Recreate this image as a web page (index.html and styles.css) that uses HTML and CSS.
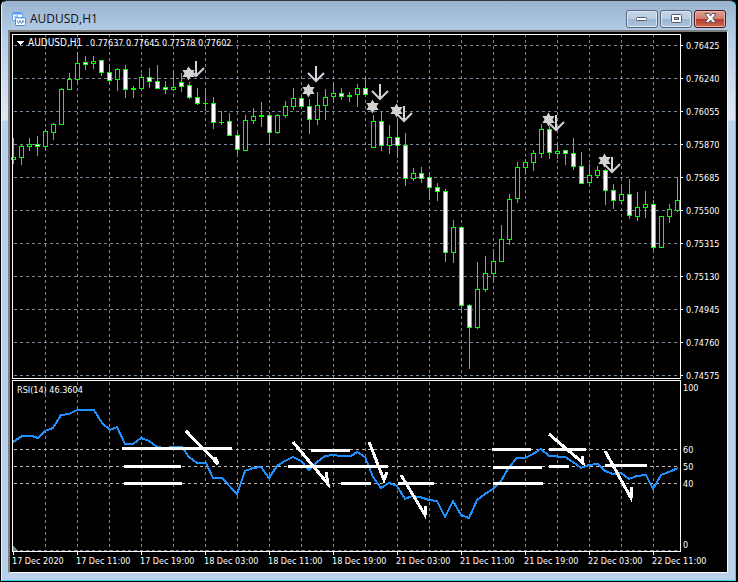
FILE: index.html
```
<!DOCTYPE html>
<html lang="en">
<head>
<meta charset="utf-8">
<title>AUDUSD,H1</title>
<link rel="stylesheet" href="styles.css">
</head>
<body>
<main class="window">
  <header class="titlebar">
    <svg class="app-icon" width="14" height="14" viewBox="0 0 14 14" aria-hidden="true">
      <rect x=".5" y=".5" width="10" height="8" rx="1" fill="#fff" stroke="#5b9cf0"/>
      <path d="M1 1.5h9" stroke="#5b9cf0" stroke-width="2"/>
      <path d="M2 5h2V4h2" fill="none" stroke="#5b9cf0"/>
      <rect x="3.5" y="5.5" width="10" height="8" rx="1" fill="#fff" stroke="#4b88e0"/>
      <path d="M4 6h9" stroke="#72a8f2"/>
      <path d="M5 8.500l1.500 3L8 8.500l1.500 3L11 8.500l1 2" fill="none" stroke="#4b88e0"/>
    </svg>
    <h1 class="title">AUDUSD,H1</h1>
    <div class="controls">
      <button class="control" type="button" aria-label="Minimize">
        <svg width="12" height="6" viewBox="0 0 12 6"><rect x=".5" y="1.5" width="10" height="3" rx="1" fill="#fff" stroke="#535666"/></svg>
      </button>
      <button class="control" type="button" aria-label="Restore">
        <svg width="11" height="9" viewBox="0 0 11 9"><rect x=".5" y=".5" width="10" height="8" rx="1" fill="#fff" stroke="#535666"/><rect x="3.5" y="3.5" width="4" height="2" fill="#a9c0da" stroke="#535666"/></svg>
      </button>
      <button class="control close" type="button" aria-label="Close">
        <svg width="13" height="11" viewBox="0 0 13 11"><path d="M1 .5h3.500l2 2.500 2-2.500H12L8.800 5.200 12 9.500H8.500l-2-2.500-2 2.500H1l3.200-4.300z" fill="#fff" stroke="#535666"/></svg>
      </button>
    </div>
  </header>
  <div class="frame">
    <svg class="chart" viewBox="10 32 717 540" role="img" aria-label="AUDUSD hourly candles with RSI">
      <g id="grid" class="grid"></g>
      <g class="level">
        <path d="M14 449.500H680M14 466.500H680M14 483.500H680"/>
      </g>
      <g id="candles" class="candles"></g>
      <g id="signals"></g>
      <path class="caret" d="M16 41h8l-4 4z"/>
      <g id="header" class="label"><text class="symbol" x="28" y="46">AUDUSD,H1</text></g>
      <path class="corner" d="M13 546l5 5h-5z"/>
      <polyline id="rsi" class="rsi"/>
      <g id="marks"></g>
      <path class="border" d="M12.500 378.500V34.500H680.500V378.500ZM12.500 380.500H680.500V551.500H12.500Z"/>
      <text class="label" x="17" y="393">RSI(14) 46.3604</text>
      <g id="ticks" class="border"></g>
      <g id="axis" class="label"></g>
    </svg>
  </div>
</main>
<script src="chart.js"></script>
</body>
</html>
```
FILE: styles.css
```
* { box-sizing: border-box; }
body { margin: 0; background: #000; font-family: "Open Sans", "Noto Sans", sans-serif; }
.window {
  margin: 0 2px 1px 1px;
  padding: 0 7px 7px 6px;
  border: 1px solid #35d4ee;
  border-top-color: #303840;
  border-left-color: #eaf6ff;
  border-radius: 6px 6px 0 0;
  background: linear-gradient(#9ab4d0 0, #b3cce6 32px, #dfe9f5 119px, #b9d1ea 120px);
}
.titlebar {
  display: flex;
  align-items: center;
  height: 29px;
  padding: 6px 2px 0 4px;
  gap: 4px;
}
.title { margin: 0; flex: 1; font-size: 12px; line-height: 16px; font-weight: 400; color: #111; }
.controls { display: flex; gap: 2px; }
.control {
  display: flex;
  align-items: center;
  justify-content: center;
  width: 32px;
  height: 18px;
  padding: 0;
  border: 1px solid #56697f;
  border-radius: 3px;
  background: linear-gradient(#c3d4e7 0, #b9cde2 48%, #9bb5d1 50%, #afc6df 100%);
  box-shadow: inset 0 0 0 1px #dbe7f4;
}
.close {
  border-color: #4a1a1a;
  background: linear-gradient(#e0a197 0, #cf7b6d 48%, #b5392a 50%, #cc6a50 100%);
  box-shadow: inset 0 0 0 1px #e6b5aa;
}
.frame { border: 1px solid #f7f7f7; border-top: 2px solid #7c7c7c; border-left: 2px solid #808080; background: #000; }
.chart { display: block; width: 100%; height: auto; shape-rendering: crispEdges; }
.grid { stroke: #778899; stroke-dasharray: 3 3; }
.level { stroke: #c0c0c0; stroke-dasharray: 3 3; }
.candles { stroke: #0f0; fill: #000; }
.candles .down { fill: #fff; }
.star { fill: #d3d3d3; shape-rendering: auto; }
.arrow { fill: none; stroke: #d6d3d8; stroke-width: 2; shape-rendering: auto; }
.caret { fill: #fff; }
.corner { fill: #778899; }
.label { fill: #fff; font-family: "DejaVu Sans Condensed", "DejaVu Sans", sans-serif; font-stretch: condensed; font-size: 9px; }
.symbol { font-size: 10px; }
.rsi { fill: none; stroke: #1e90ff; stroke-width: 2; }
.bar { stroke: #fff; stroke-width: 3; }
.pointer { fill: none; stroke: #fff; stroke-width: 3; }
.border { fill: none; stroke: #fff; }
```
FILE: chart.js
```
const NS = "http://www.w3.org/2000/svg";
const byId = (id) => document.getElementById(id);

function add(parent, tag, attrs, text) {
  const el = document.createElementNS(NS, tag);
  for (const key in attrs) el.setAttribute(key, attrs[key]);
  if (text) el.textContent = text;
  byId(parent).appendChild(el);
}

// Grid lines
for (let x = 45; x < 680; x += 32) {
  add("grid", "path", { d: `M${x + 0.5} 34V378M${x + 0.5} 382V551` });
}
for (let y = 45; y < 378; y += 33) add("grid", "path", { d: `M14 ${y + 0.5}H680` });
add("grid", "path", { d: "M14 550.5H680" });

// Candles, one every 8 units: high, low, body top, body bottom, falling
const candles = [
  [138,164,157,160,0],[145,165,146,158,0],[138,151,144,147,0],[136,156,144,147,1],
  [129,150,131,147,0],[123,140,124,133,0],[88,125,89,125,0],[73,90,79,90,0],
  [52,84,63,80,0],[56,70,62,65,1],[56,69,61,64,0],[60,76,60,73,1],
  [64,84,72,81,1],[68,91,69,80,0],[65,98,69,90,1],[86,98,88,90,0],
  [74,91,77,89,0],[68,88,77,82,1],[65,89,81,89,1],[81,94,87,90,1],
  [71,91,87,90,0],[73,92,82,87,1],[82,99,85,98,1],[88,105,97,104,1],
  [90,111,103,104,0],[97,129,103,123,1],[111,125,122,123,0],[113,136,121,136,1],
  [132,154,135,150,1],[115,151,120,151,0],[108,124,116,121,0],[102,127,115,117,0],
  [112,145,115,133,1],[114,134,115,133,0],[101,118,106,116,0],[88,110,98,107,0],
  [97,109,98,107,1],[99,134,106,120,1],[92,125,105,120,0],[89,120,97,106,0],
  [82,103,93,97,0],[88,100,93,97,1],[92,102,95,97,0],[84,107,88,95,0],
  [78,95,88,95,1],[115,148,121,148,0],[112,151,121,146,1],[125,154,137,146,0],
  [118,158,137,146,1],[133,186,145,179,1],[168,181,173,179,0],[167,183,173,179,1],
  [175,200,177,188,1],[183,201,187,192,1],[189,262,191,253,1],[220,263,227,253,0],
  [227,313,227,306,1],[304,369,305,328,1],[262,329,289,328,0],[256,292,273,290,0],
  [249,283,261,274,0],[225,262,239,262,0],[194,245,199,240,0],[162,203,167,199,0],
  [159,174,162,168,0],[150,171,153,163,0],[124,158,129,154,0],[126,159,129,153,1],
  [142,159,151,154,0],[150,165,150,154,1],[138,170,153,167,1],[152,184,166,184,1],
  [164,186,175,183,0],[166,178,170,176,0],[169,205,170,191,1],[184,209,190,201,1],
  [186,203,194,201,0],[179,219,194,216,1],[192,221,207,217,0],[191,218,204,208,0],
  [200,250,204,248,1],[216,248,216,248,0],[204,223,209,217,0],[177,212,200,211,0]
];
candles.forEach(([high, low, top, bottom, falling], i) => {
  const x = 13 + i * 8;
  add("candles", "path", { d: `M${x + 0.5} ${high}V${low}` });
  if (bottom - top < 2) {
    add("candles", "path", { d: `M${x - 2} ${top + 0.5}H${x + 3}` });
  } else {
    add("candles", "rect", {
      x: x - 1.5, y: top + 0.5, width: 4, height: bottom - top - 1,
      class: falling ? "down" : "up"
    });
  }
});

// Signal stars and arrows over the candles
const stars = [[188,73],[308,90],[372,106],[396,110],[548,119],[604,160]];
stars.forEach(([x, y]) => {
  let points = [];
  for (let k = 0; k < 12; k++) {
    const r = k % 2 ? 4 : 7, a = (k * Math.PI) / 6;
    points.push(`${(x + 0.5 + r * Math.sin(a)).toFixed(1)},${(y + 0.5 - r * Math.cos(a)).toFixed(1)}`);
  }
  add("signals", "polygon", { points: points.join(" "), class: "star" });
});
const arrows = [[196,61],[316,66],[380,84],[404,106],[556,115],[612,157]];
arrows.forEach(([x, y]) => {
  add("signals", "path", { d: `M${x} ${y}v15M${x - 8} ${y + 7}l8 8l8 -8`, class: "arrow" });
});

// Quote line
["0.77637", "0.77645", "0.77578", "0.77602"].forEach((quote, i) => {
  add("header", "text", { x: 90 + i * 36, y: 46 }, quote);
});

// RSI curve
byId("rsi").setAttribute("points",
  "13,442 22,436 32,436 38,438 45,431 53,428 61,415 69,414 77,410 94,410 102,423 110,430 117,427 " +
  "125,444 133,444 141,438 149,441 157,447 165,448 173,447 182,447 189,457 197,463 206,463 213,478 " +
  "222,478 237,494 245,471 253,468 261,467 269,478 277,466 285,461 293,457 301,461 309,470 317,462 " +
  "325,456 333,455 341,456 351,456 357,452 365,457 373,477 381,488 389,483 397,486 405,499 412,496 " +
  "420,497 429,500 437,501 445,517 453,501 461,515 469,518 477,500 485,494 493,489 501,481 509,467 " +
  "517,458 525,458 533,454 541,449 549,456 565,457 573,462 581,468 589,465 598,464 605,471 613,474 " +
  "621,473 629,479 637,476 646,475 653,489 661,475 669,472 678,468");

// Hand-drawn levels and pointers in the RSI pane
[
  [122,232,448],[124,181,466],[124,182,483],[311,350,450],[288,388,466],[341,371,483],[398,434,483],
  [492,531,449],[493,542,467],[493,543,483],[549,586,449],[549,569,466],[605,647,465]
].forEach(([x1, x2, y]) => add("marks", "path", { d: `M${x1} ${y + 0.5}H${x2}`, class: "bar" }));
[
  [186,431,219,465,215,457],[293,442,329,485,326,472],[369,442,385,481,387,472],
  [401,475,426,516,426,506],[549,434,584,464,582,456],[605,451,632,499,632,487]
].forEach(([x1, y1, x2, y2, bx, by]) =>
  add("marks", "path", { d: `M${x1} ${y1}L${x2 - 1} ${y2 - 1}L${bx} ${by}`, class: "pointer" }));

// Axes
["0.76425","0.76240","0.76055","0.75870","0.75685","0.75500","0.75315","0.75130","0.74945","0.74760","0.74575"]
  .forEach((price, i) => {
    const y = 45 + i * 33;
    add("ticks", "path", { d: `M681 ${y + 0.5}h2` });
    add("axis", "text", { x: 686, y: y + 4 }, price);
  });
[["100",391],["60",453],["50",470],["40",487],["0",548]]
  .forEach(([value, y]) => add("axis", "text", { x: 683, y }, value));
["17 Dec 2020","17 Dec 11:00","17 Dec 19:00","18 Dec 03:00","18 Dec 11:00","18 Dec 19:00","21 Dec 03:00",
 "21 Dec 11:00","21 Dec 19:00","22 Dec 03:00","22 Dec 11:00"].forEach((time, i) => {
  add("ticks", "path", { d: `M${13.5 + i * 64} 552v3` });
  add("axis", "text", { x: 12 + i * 64, y: 564 }, time);
});
```
